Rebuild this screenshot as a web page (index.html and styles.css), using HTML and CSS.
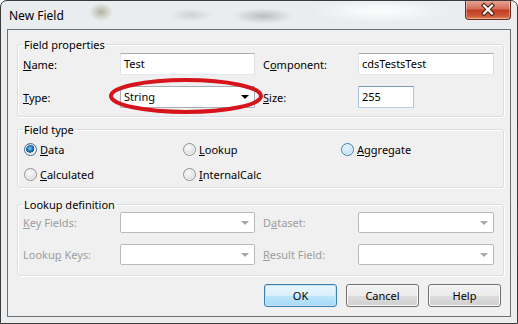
FILE: index.html
```html
<!DOCTYPE html>
<html lang="en">
<head>
  <meta charset="UTF-8" />
  <title>New Field</title>
  <link rel="stylesheet" href="styles.css">
</head>
<body>
  <div class="window">
    <div class="titlebar">
      <span class="title">New Field</span>
      <button class="close" title="Close">
        <svg width="44" height="17" viewBox="0 0 44 17">
          <path d="M18 4.5 L26 12.5 M26 4.5 L18 12.5" stroke="#4a1d14" stroke-width="4.2" stroke-linecap="square" fill="none"/>
          <path d="M18 4.5 L26 12.5 M26 4.5 L18 12.5" stroke="#fff" stroke-width="2.2" stroke-linecap="square" fill="none"/>
        </svg>
      </button>
    </div>

    <div class="client">
      <fieldset class="group props">
        <legend>Field properties</legend>
        <div class="rows">
          <label><u>N</u>ame:</label>
          <div class="edit">Test</div>
          <span></span>
          <label>C<u>o</u>mponent:</label>
          <div class="edit">cdsTestsTest</div>

          <label><u>T</u>ype:</label>
          <div class="combo">String<i class="arrow"></i></div>
          <span></span>
          <label><u>S</u>ize:</label>
          <div class="edit size">255</div>
        </div>
      </fieldset>

      <fieldset class="group kinds">
        <legend>Field type</legend>
        <div class="radios">
          <div class="radio checked"><i class="dot"></i><span><u>D</u>ata</span></div>
          <div class="radio"><i class="dot"></i><span><u>L</u>ookup</span></div>
          <div class="radio hover"><i class="dot"></i><span><u>A</u>ggregate</span></div>
          <div class="radio"><i class="dot"></i><span><u>C</u>alculated</span></div>
          <div class="radio"><i class="dot"></i><span><u>I</u>nternalCalc</span></div>
        </div>
      </fieldset>

      <fieldset class="group lookup">
        <legend>Lookup definition</legend>
        <div class="rows disabled">
          <label><u>K</u>ey Fields:</label>
          <div class="combo"><i class="arrow"></i></div>
          <span></span>
          <label>D<u>a</u>taset:</label>
          <div class="combo"><i class="arrow"></i></div>

          <label>Looku<u>p</u> Keys:</label>
          <div class="combo"><i class="arrow"></i></div>
          <span></span>
          <label><u>R</u>esult Field:</label>
          <div class="combo"><i class="arrow"></i></div>
        </div>
      </fieldset>

      <div class="buttons">
        <button class="btn default">OK</button>
        <button class="btn">Cancel</button>
        <button class="btn">Help</button>
      </div>
    </div>

    <!-- red marker drawn over the Type combo -->
    <svg class="mark" width="160" height="40" viewBox="0 0 160 40">
      <ellipse cx="79" cy="19" rx="75" ry="16" fill="none" stroke="#d5141c" stroke-width="4"/>
    </svg>
  </div>
</body>
</html>
```

FILE: styles.css
```css
body {
  margin: 0;
  font-family: "Noto Sans", sans-serif;
  font-size: 11px;
  color: #000;
}

.window {
  position: relative;
  width: 518px;
  height: 324px;
  box-sizing: border-box;
  border: 1px solid #3a3a3a;
  border-radius: 7px 7px 0 0;
  overflow: hidden;
  background:
    radial-gradient(ellipse 12px 9px at 100px 11px, rgba(120, 110, 60, 0.45), transparent),
    radial-gradient(ellipse 22px 7px at 190px 14px, rgba(150, 150, 150, 0.3), transparent),
    radial-gradient(ellipse 30px 8px at 262px 15px, rgba(120, 120, 120, 0.4), transparent),
    radial-gradient(ellipse 70px 12px at 380px 10px, rgba(255, 255, 255, 0.9), transparent),
    linear-gradient(#e9edf0, #eceff2);
}

.titlebar {
  height: 28px;
  display: flex;
  justify-content: space-between;
  align-items: flex-start;
}

.title {
  padding: 6px 0 0 8px;
  font-size: 12px;
}

.close {
  width: 46px;
  height: 20px;
  margin: -1px 6px 0 0;
  padding: 0;
  border: 1px solid #6b2a1e;
  border-top: none;
  border-radius: 0 0 4px 4px;
  background: linear-gradient(#e9a99a, #d4705b 45%, #c13b22 55%, #cf5a38 85%, #e48a5c);
  box-shadow: inset 0 0 0 1px rgba(255, 255, 255, 0.35);
}

.close svg {
  display: block;
}

.client {
  height: 288px;
  box-sizing: border-box;
  margin: 0 6px;
  border: 1px solid #6e6e6e;
  background: #f0f0f0;
  padding: 7px 6px 0 9px;
  display: flex;
  flex-direction: column;
}

.group {
  margin: 0;
  padding: 1px 7px 8px 5px;
  border: 1px solid #d5dfe5;
  border-radius: 3px;
  box-shadow: inset 1px 1px 0 #fff, 1px 1px 0 #fff;
}

.group legend {
  padding: 0 1px;
  line-height: 15px;
}

.kinds {
  margin-top: 5px;
  padding: 4px 7px 5px 5px;
}

.lookup {
  margin-top: 9px;
  padding: 0 7px 10px 5px;
}

.rows {
  display: grid;
  grid-template-columns: 97px 135px 8px 95px 136px;
  grid-auto-rows: 22px;
  row-gap: 11px;
  align-items: center;
}

.lookup .rows {
  grid-auto-rows: 21px;
}

.edit,
.combo {
  position: relative;
  height: 100%;
  box-sizing: border-box;
  border: 1px solid;
  border-color: #abadb3 #dbdfe6 #e3e9ef #e2e3ea;
  background: #fff;
  padding: 0 3px;
  line-height: 20px;
}

.combo {
  border-color: #abadb3;
  border-radius: 1px;
}

.edit.size {
  width: 56px;
  border-color: #7a9cc4 #a9c4e2 #b7d0ea #a9c4e2;
}

.arrow {
  position: absolute;
  right: 5px;
  top: 8px;
  width: 0;
  height: 0;
  border-left: 4px solid transparent;
  border-right: 4px solid transparent;
  border-top: 4px solid #000;
}

.disabled label {
  color: #9d9d9d;
}

.disabled .combo {
  border-color: #b9b9b9;
  border-radius: 2px;
}

.disabled .arrow {
  border-top-color: #a8a8a8;
  top: 8px;
}

.radios {
  display: grid;
  grid-template-columns: 159px 158px 1fr;
  grid-auto-rows: 16px;
  row-gap: 9px;
  align-items: center;
  padding-left: 1px;
}

.radio {
  display: flex;
  align-items: center;
  gap: 3px;
}

.dot {
  width: 13px;
  height: 13px;
  box-sizing: border-box;
  border-radius: 50%;
  border: 1px solid #8f9092;
  background: radial-gradient(circle at 40% 35%, #fbfbfb, #dcdcdc 70%, #cfcfcf);
  box-shadow: inset 0 0 0 1px #f4f4f4;
}

.radio.checked .dot {
  border-color: #3c6e96;
  background: radial-gradient(circle at 45% 40%, #7fd0f3 0, #2a87c6 25%, #1c4f7c 45%, #e6e6e6 50%, #f6f6f6);
}

.radio.hover .dot {
  border-color: #3c7fb1;
  background: radial-gradient(circle at 45% 40%, #e5f5fd, #b7dff4 70%, #9fd2ef);
}

.buttons {
  margin-top: 8px;
  display: flex;
  justify-content: flex-end;
  gap: 9px;
  padding-right: 3px;
}

.btn {
  width: 73px;
  height: 23px;
  padding: 0;
  font-family: "Noto Sans", sans-serif;
  font-size: 11px;
  color: #000;
  border: 1px solid #707070;
  border-radius: 3px;
  background: linear-gradient(#f2f2f2, #ebebeb 50%, #dddddd 51%, #cfcfcf);
  box-shadow: inset 0 0 0 1px #fcfcfc;
}

.btn.default {
  border-color: #3c7fb1;
  background: linear-gradient(#eaf6fd, #d9f0fc 50%, #bee6fd 51%, #a7d9f5);
  box-shadow: inset 0 0 0 1px #c2e3f5;
}

.mark {
  position: absolute;
  left: 106px;
  top: 76px;
}
```
